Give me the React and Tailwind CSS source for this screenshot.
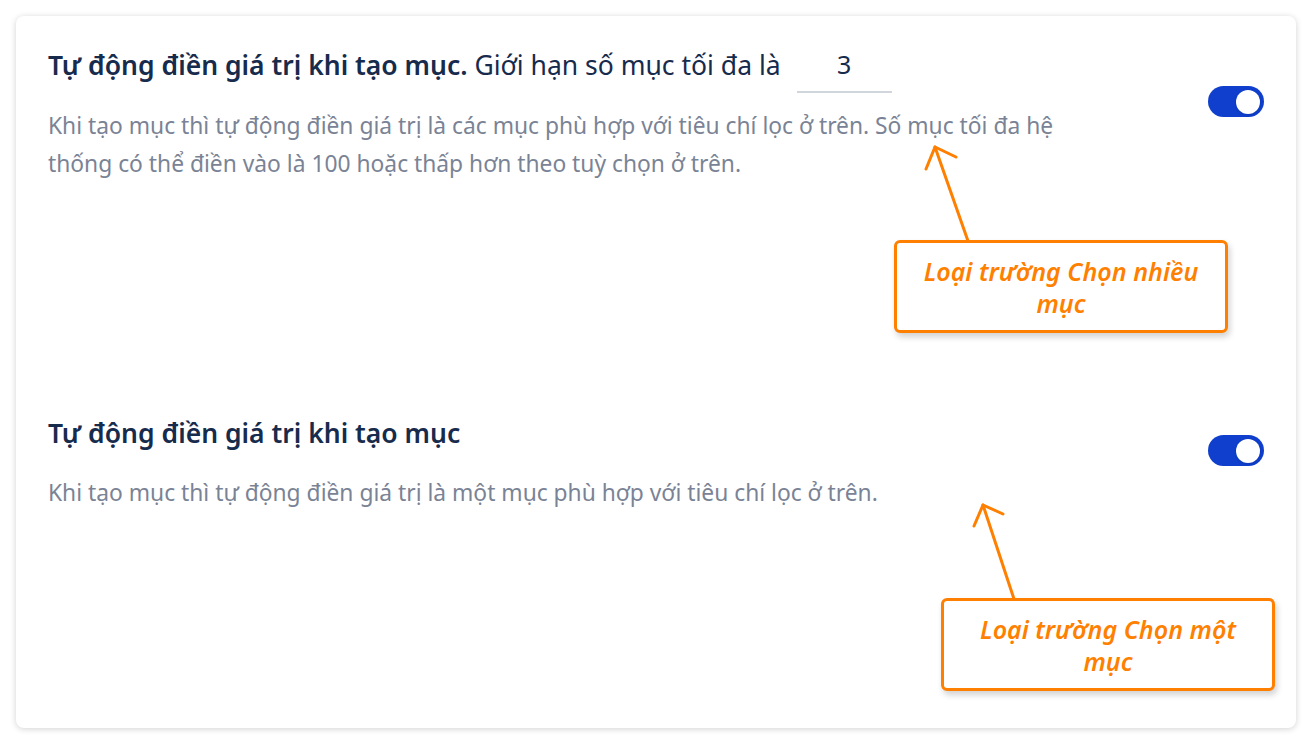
import { useState } from "react"

function Toggle({ on }) {
  return (
    <div className={on ? "w-[56px] h-[31px] rounded-full bg-[#0f3fcc] flex items-center justify-end px-[4px] shrink-0" : "w-[56px] h-[31px] rounded-full bg-gray-300 flex items-center px-[4px] shrink-0"}>
      <div className="w-[24px] h-[24px] rounded-full bg-white shadow" />
    </div>
  )
}

function Note({ text }) {
  return (
    <div className="w-[334px] h-[93px] border-[3px] border-[#ff7f00] rounded-[6px] bg-white shadow-[2px_4px_6px_rgba(0,0,0,0.18)] flex items-center justify-center px-6">
      <p className="text-center text-[25px] leading-[32px] italic font-semibold text-[#ff7f00]">{text}</p>
    </div>
  )
}

export default function App() {
  const [limit, setLimit] = useState("3")

  return (
    <div className="w-[1312px] h-[744px] bg-white p-4 font-['Noto_Sans',sans-serif]">
      <div className="relative h-full rounded-lg bg-white shadow-[0_1px_6px_rgba(0,0,0,0.18)] px-8 pt-[29px]">

        {/* section 1 */}
        <div className="flex items-start justify-between">
          <div className="w-[1060px]">
            <div className="flex items-start gap-4 text-[26.5px] text-[#172b4d]">
              <p className="mt-[2px] leading-[36px]"><span className="font-semibold">Tự động điền giá trị khi tạo mục.</span> Giới hạn số mục tối đa là</p>
              <input value={limit} onChange={(e) => setLimit(e.target.value)}
                className="w-[95px] h-[48px] pb-[8px] border-b-2 border-gray-300 text-center text-[25px] text-[#172b4d] outline-none" />
            </div>
            <p className="mt-[14px] text-[22.8px] leading-[38px] text-[#7a8395]">
              Khi tạo mục thì tự động điền giá trị là các mục phù hợp với tiêu chí lọc ở trên. Số mục tối đa hệ thống có thể điền vào là 100 hoặc thấp hơn theo tuỳ chọn ở trên.
            </p>
          </div>
          <div className="mt-[41px]"><Toggle on /></div>
        </div>

        {/* section 2 */}
        <div className="flex items-start justify-between mt-[232px]">
          <div>
            <p className="text-[26.5px] leading-[36px] font-semibold text-[#172b4d]">Tự động điền giá trị khi tạo mục</p>
            <p className="mt-[23px] text-[22.8px] leading-[38px] text-[#7a8395]">
              Khi tạo mục thì tự động điền giá trị là một mục phù hợp với tiêu chí lọc ở trên.
            </p>
          </div>
          <div className="mt-[20px]"><Toggle on /></div>
        </div>

        {/* annotations */}
        <svg className="absolute inset-0 w-full h-full pointer-events-none" viewBox="0 0 1280 712">
          <g stroke="#ff7f00" strokeWidth="3" fill="none" strokeLinecap="round" strokeLinejoin="round">
            <path d="M952 225 L919 131" />
            <path d="M910 153 L919 131 L940 141" />
            <path d="M998 583 L967 489" />
            <path d="M958 510 L967 489 L987 498" />
          </g>
        </svg>
        <div className="absolute left-[878px] top-[224px]"><Note text="Loại trường Chọn nhiều mục" /></div>
        <div className="absolute left-[925px] top-[582px]"><Note text="Loại trường Chọn một mục" /></div>
      </div>
    </div>
  )
}
